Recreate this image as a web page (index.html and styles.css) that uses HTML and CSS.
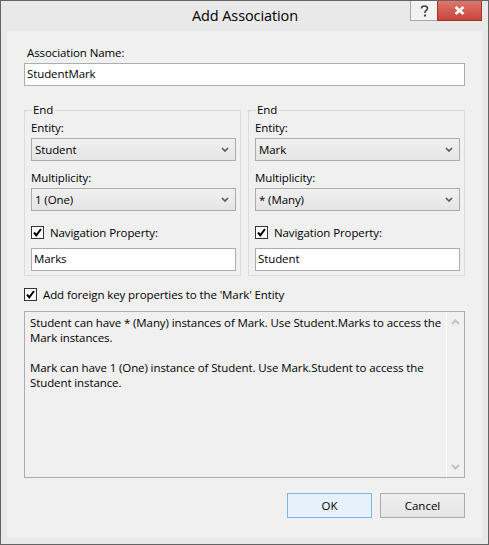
FILE: index.html
```html
<!DOCTYPE html>
<html lang="en">
<head>
    <meta charset="UTF-8">
    <meta name="viewport" content="width=device-width, initial-scale=1.0">
    <title>Add Association</title>
    <link rel="stylesheet" href="styles.css">
</head>
<body>
    <div class="window">
        <div class="titlebar">
            <div></div>
            <div class="title">Add Association</div>
            <div class="caption-btns">
                <div class="btn-help">
                    <svg width="9" height="12" viewBox="0 0 9 12"><path d="M1.5 3.5 C1.5 1.5 3 1 4.5 1 C6.3 1 7.5 2 7.5 3.5 C7.5 5.2 5 5.5 5 7.3 L5 8" fill="none" stroke="#444" stroke-width="1.6"/><rect x="4" y="9.5" width="2" height="2" fill="#444"/></svg>
                </div>
                <div class="btn-close">
                    <svg width="11" height="9" viewBox="0 0 11 9"><path d="M1.5 1 L9.5 8 M9.5 1 L1.5 8" stroke="#fff" stroke-width="2.6"/></svg>
                </div>
            </div>
        </div>

        <div class="content">
            <div class="label">Association Name:</div>
            <div class="textbox name-box">StudentMark</div>

            <div class="ends">
                <fieldset class="end">
                    <legend>End</legend>
                    <div class="label">Entity:</div>
                    <div class="combo">Student<svg class="arrow" width="8" height="5" viewBox="0 0 8 5"><path d="M1 1 L4 4 L7 1" fill="none" stroke="#555" stroke-width="1.6"/></svg></div>
                    <div class="label label-gap">Multiplicity:</div>
                    <div class="combo">1 (One)<svg class="arrow" width="8" height="5" viewBox="0 0 8 5"><path d="M1 1 L4 4 L7 1" fill="none" stroke="#555" stroke-width="1.6"/></svg></div>
                    <div class="check-row nav">
                        <span class="checkbox"><svg width="11" height="11" viewBox="0 0 11 11"><path d="M2 5.5 L4.3 8.3 L9 2" fill="none" stroke="#000" stroke-width="2"/></svg></span>
                        Navigation Property:
                    </div>
                    <div class="textbox">Marks</div>
                </fieldset>
                <fieldset class="end">
                    <legend>End</legend>
                    <div class="label">Entity:</div>
                    <div class="combo">Mark<svg class="arrow" width="8" height="5" viewBox="0 0 8 5"><path d="M1 1 L4 4 L7 1" fill="none" stroke="#555" stroke-width="1.6"/></svg></div>
                    <div class="label label-gap">Multiplicity:</div>
                    <div class="combo">* (Many)<svg class="arrow" width="8" height="5" viewBox="0 0 8 5"><path d="M1 1 L4 4 L7 1" fill="none" stroke="#555" stroke-width="1.6"/></svg></div>
                    <div class="check-row nav">
                        <span class="checkbox"><svg width="11" height="11" viewBox="0 0 11 11"><path d="M2 5.5 L4.3 8.3 L9 2" fill="none" stroke="#000" stroke-width="2"/></svg></span>
                        Navigation Property:
                    </div>
                    <div class="textbox">Student</div>
                </fieldset>
            </div>

            <div class="check-row fk">
                <span class="checkbox"><svg width="11" height="11" viewBox="0 0 11 11"><path d="M2 5.5 L4.3 8.3 L9 2" fill="none" stroke="#000" stroke-width="2"/></svg></span>
                Add foreign key properties to the 'Mark' Entity
            </div>

            <div class="summary">
                <div class="summary-text">
                    <p>Student can have * (Many) instances of Mark. Use Student.Marks to access the Mark instances.</p>
                    <p>Mark can have 1 (One) instance of Student. Use Mark.Student to access the Student instance.</p>
                </div>
                <div class="scrollbar">
                    <svg width="9" height="6" viewBox="0 0 9 6"><path d="M1 5 L4.5 1.5 L8 5" fill="none" stroke="#c2c2c2" stroke-width="2"/></svg>
                    <svg width="9" height="6" viewBox="0 0 9 6"><path d="M1 1 L4.5 4.5 L8 1" fill="none" stroke="#c2c2c2" stroke-width="2"/></svg>
                </div>
            </div>

            <div class="buttons">
                <button class="btn-ok">OK</button>
                <button class="btn-cancel">Cancel</button>
            </div>
        </div>
    </div>
</body>
</html>
```

FILE: styles.css
```css
body {
    margin: 0;
    font-family: 'Segoe UI', 'Open Sans', sans-serif;
    font-size: 11.5px;
    letter-spacing: -0.1px;
    color: #000;
    background: #fff;
}
.window {
    width: 489px;
    height: 545px;
    box-sizing: border-box;
    border: 1px solid #646464;
    background: #e9e9e9;
    display: flex;
    flex-direction: column;
    padding: 0 6px 6px 6px;
}
.titlebar {
    height: 30px;
    display: grid;
    grid-template-columns: 1fr auto 1fr;
    align-items: start;
}
.title {
    font-size: 14.5px;
    line-height: 30px;
    padding-left: 1px;
}
.caption-btns {
    display: flex;
    justify-content: flex-end;
}
.btn-help, .btn-close {
    height: 20px;
    display: flex;
    align-items: center;
    justify-content: center;
    box-sizing: border-box;
}
.btn-help {
    width: 27px;
    border: 1px solid #a7a7a7;
    border-top: none;
    border-right: none;
    background: #f2f2f2;
}
.btn-close {
    width: 45px;
    background: linear-gradient(#e0766b, #c7443a);
    border: 1px solid #a0332b;
    border-top: none;
}
.content {
    flex: 1;
    background: #f0f0f0;
    padding: 14px 17px 0 17px;
    display: flex;
    flex-direction: column;
}
.label {
    line-height: 16px;
    padding-left: 3px;
}
.textbox {
    height: 23px;
    box-sizing: border-box;
    border: 1px solid #abadb3;
    background: #fff;
    line-height: 20px;
    padding-left: 2px;
}
.name-box {
    margin-top: 2px;
}
.ends {
    display: grid;
    grid-template-columns: 1fr 1fr;
    gap: 7px;
    margin-top: 16px;
}
.end {
    margin: 0;
    border: 1px solid #dcdcdc;
    padding: 0 4px 4px 6px;
    min-width: 0;
}
.end legend {
    padding: 0 2px 0 1px;
    margin-left: 1px;
    line-height: 16px;
}
.end .label {
    padding-left: 0;
    margin-top: 2px;
}
.label-gap {
    margin-top: 9px !important;
}
.combo {
    height: 23px;
    box-sizing: border-box;
    border: 1px solid #acacac;
    background: linear-gradient(#f0f0f0, #e5e5e5);
    line-height: 21px;
    padding-left: 3px;
    margin-top: 2px;
    display: flex;
    justify-content: space-between;
    align-items: center;
}
.arrow {
    margin-right: 6px;
}
.check-row {
    display: flex;
    align-items: center;
    height: 16px;
}
.checkbox {
    width: 13px;
    height: 13px;
    box-sizing: border-box;
    border: 1px solid #333;
    background: #fff;
    display: flex;
    align-items: center;
    justify-content: center;
    margin-right: 6px;
}
.nav {
    margin-top: 13px;
    margin-bottom: 8px;
}
.fk {
    margin-top: 10px;
}
.summary {
    margin-top: 9px;
    height: 167px;
    box-sizing: border-box;
    border: 1px solid #abadb3;
    display: flex;
}
.summary-text {
    flex: 1;
    padding: 3px 4px 0 5px;
    line-height: 15px;
}
.summary-text p {
    margin: 0 0 15px 0;
}
.scrollbar {
    width: 17px;
    border-left: 1px solid #fff;
    display: flex;
    flex-direction: column;
    justify-content: space-between;
    align-items: center;
    padding: 7px 0 7px 0;
}
.buttons {
    display: flex;
    justify-content: flex-end;
    gap: 8px;
    margin-top: 15px;
}
button {
    width: 85px;
    height: 25px;
    font-family: inherit;
    font-size: 11.5px;
    color: #000;
    padding: 0;
}
.btn-ok {
    background: #e5f1fb;
    border: 1px solid #7eb4ea;
}
.btn-cancel {
    background: linear-gradient(#f0f0f0, #e5e5e5);
    border: 1px solid #acacac;
}
```
